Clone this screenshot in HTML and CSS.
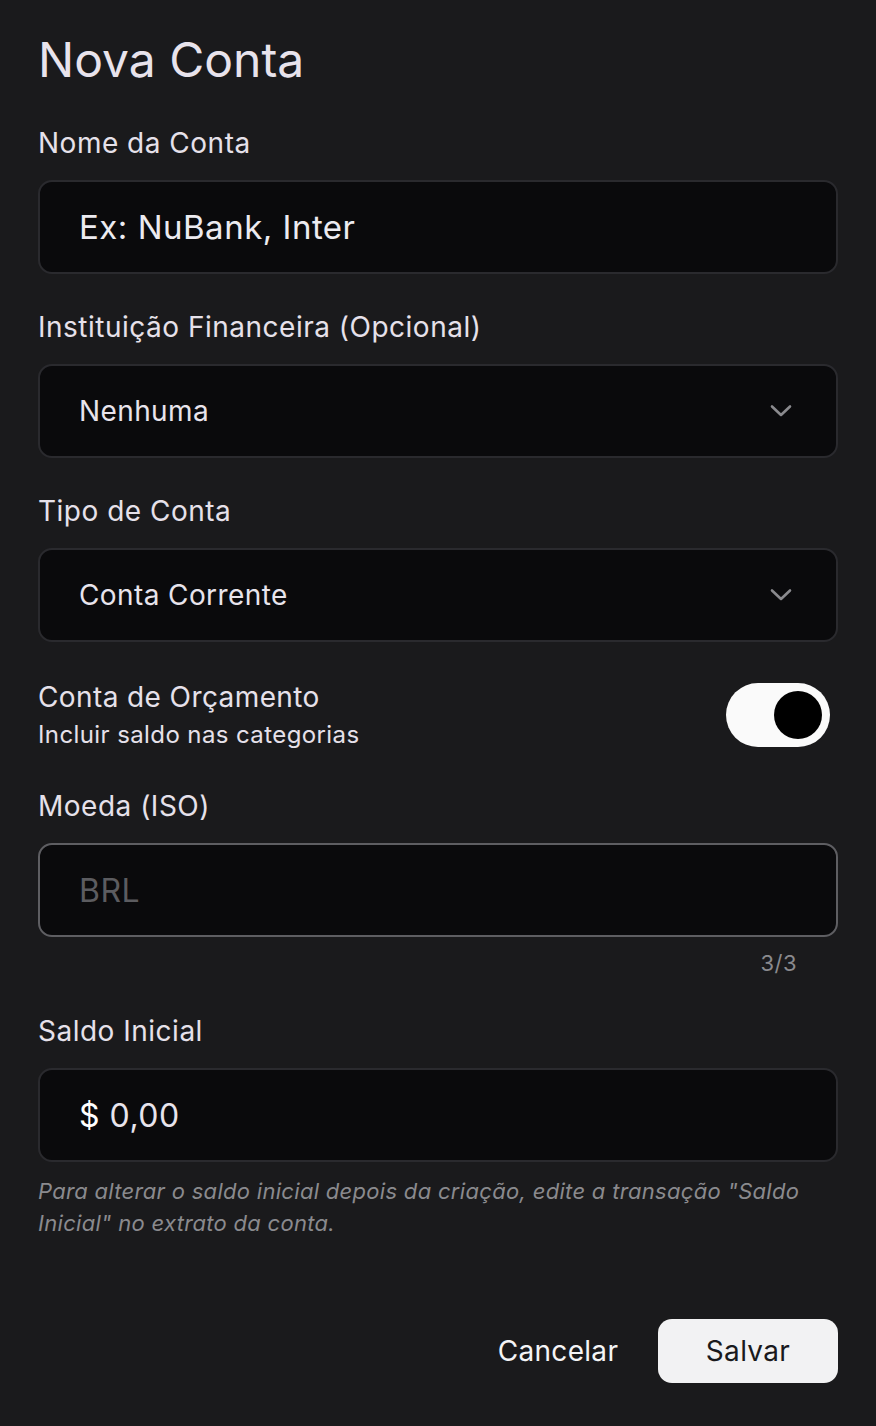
FILE: index.html
```html
<!DOCTYPE html>
<html lang="pt-BR">
<head>
<meta charset="utf-8">
<title>Nova Conta</title>
<link rel="stylesheet" href="styles.css">
</head>
<body>
<main class="sheet">
  <h1 class="title">Nova Conta</h1>

  <div class="field">
    <label class="label">Nome da Conta</label>
    <div class="input"><span class="value">Ex: NuBank, Inter</span></div>
  </div>

  <div class="field">
    <label class="label">Instituição Financeira (Opcional)</label>
    <div class="input select">
      <span class="value small">Nenhuma</span>
      <svg class="chev" width="22" height="14" viewBox="0 0 22 14"><path d="M2 2.5 L11 11 L20 2.5" fill="none" stroke="#8a8a8e" stroke-width="2.6" stroke-linecap="round" stroke-linejoin="round"/></svg>
    </div>
  </div>

  <div class="field">
    <label class="label">Tipo de Conta</label>
    <div class="input select">
      <span class="value small">Conta Corrente</span>
      <svg class="chev" width="22" height="14" viewBox="0 0 22 14"><path d="M2 2.5 L11 11 L20 2.5" fill="none" stroke="#8a8a8e" stroke-width="2.6" stroke-linecap="round" stroke-linejoin="round"/></svg>
    </div>
  </div>

  <div class="toggle-row">
    <div class="toggle-text">
      <div class="toggle-title">Conta de Orçamento</div>
      <div class="toggle-sub">Incluir saldo nas categorias</div>
    </div>
    <div class="switch"><div class="knob"></div></div>
  </div>

  <div class="field">
    <label class="label">Moeda (ISO)</label>
    <div class="input focus"><span class="value dim">BRL</span></div>
    <div class="counter">3/3</div>
  </div>

  <div class="field">
    <label class="label">Saldo Inicial</label>
    <div class="input"><span class="value money"><span class="cur">$</span> 0,00</span></div>
    <p class="help">Para alterar o saldo inicial depois da criação, edite a transação "Saldo Inicial" no extrato da conta.</p>
  </div>

  <div class="actions">
    <button class="btn ghost">Cancelar</button>
    <button class="btn primary">Salvar</button>
  </div>
</main>
</body>
</html>
```

FILE: styles.css
```css
html, body {
  margin: 0;
  padding: 0;
  background: #1a1a1c;
}
body {
  font-family: Inter, "Noto Sans", sans-serif;
  color: #e6e1ea;
}
.sheet {
  width: 876px;
  min-height: 1426px;
  box-sizing: border-box;
  padding: 31px 38px 0 38px;
  display: flex;
  flex-direction: column;
}
.sheet > * {
  flex-shrink: 0;
}
.title {
  margin: 0;
  font-size: 48px;
  line-height: 58px;
  font-weight: 400;
  color: #e8e3ec;
  letter-spacing: 0;
  margin-bottom: 36px;
}
.field {
  display: flex;
  flex-direction: column;
  margin-bottom: 35px;
}
.label {
  font-size: 28px;
  line-height: 36px;
  letter-spacing: 0.5px;
  margin-bottom: 19px;
  color: #e6e1ea;
}
.input {
  height: 94px;
  flex-shrink: 0;
  box-sizing: border-box;
  border: 2px solid #2a2a2e;
  border-radius: 14px;
  background: #0a0a0c;
  display: flex;
  align-items: center;
  padding: 0 39px;
}
.input.focus {
  border-color: #5e5e62;
}
.value {
  font-size: 33px;
  color: #ecebf0;
  letter-spacing: 0.5px;
}
.value.small {
  font-size: 28px;
  letter-spacing: 0.4px;
  color: #e8e4ec;
}
.value.dim {
  font-size: 32px;
  color: #5c5c60;
}
.value.money {
  font-size: 32px;
  color: #e8e4ec;
}
.cur {
  color: #ffffff;
}
.select {
  justify-content: space-between;
  padding-right: 44px;
}
.chev {
  display: block;
}
.toggle-row {
  display: flex;
  align-items: center;
  justify-content: space-between;
  margin-top: 2px;
  margin-bottom: 38px;
}
.toggle-title {
  font-size: 28px;
  line-height: 36px;
  letter-spacing: 0.4px;
}
.toggle-sub {
  font-size: 24px;
  line-height: 30px;
  letter-spacing: 0.4px;
  margin-top: 5px;
  color: #e6e1ea;
}
.switch {
  width: 104px;
  height: 64px;
  border-radius: 32px;
  background: #fafafa;
  box-sizing: border-box;
  padding: 8px;
  display: flex;
  justify-content: flex-end;
  margin-right: 8px;
}
.knob {
  width: 48px;
  height: 48px;
  border-radius: 50%;
  background: #000;
}
.counter {
  align-self: flex-end;
  font-size: 22px;
  line-height: 30px;
  color: #8a8a8e;
  margin: 11px 41px 0 0;
  letter-spacing: 0.5px;
}
.help {
  margin: 13px 0 0 0;
  font-size: 22px;
  line-height: 32px;
  font-style: italic;
  color: #8a8a8e;
  letter-spacing: 0.3px;
}
.actions {
  display: flex;
  justify-content: flex-end;
  gap: 10px;
  margin-top: 45px;
}
.btn {
  width: 180px;
  height: 64px;
  border: none;
  border-radius: 14px;
  font-family: Inter, "Noto Sans", sans-serif;
  font-size: 28px;
  letter-spacing: 0.3px;
  cursor: pointer;
}
.ghost {
  background: transparent;
  color: #f4f4f6;
}
.primary {
  background: #f2f2f3;
  color: #1a1a1c;
}
```
